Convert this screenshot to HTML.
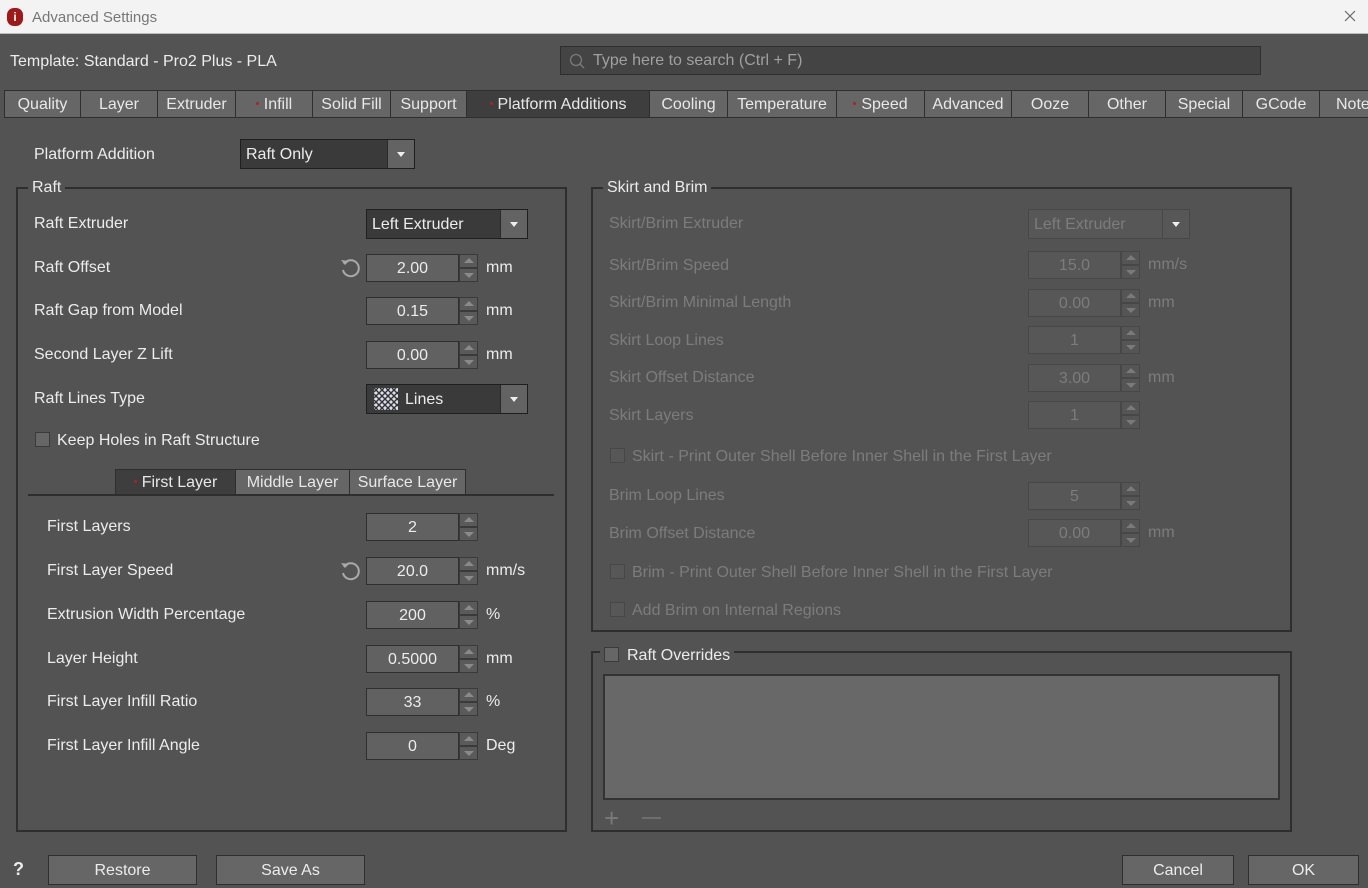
<!DOCTYPE html><html><head><style>
*{box-sizing:border-box;margin:0;padding:0}
body{width:1368px;height:888px;overflow:hidden;background:#535353;font-family:"Liberation Sans",sans-serif;font-size:16px;color:#ececec;position:relative}
.a{position:absolute}
.title{left:0;top:0;width:1368px;height:34px;background:#f3f3f3;color:#777;font-size:15px;border-bottom:1px solid #bbb}
.tab{position:absolute;top:90px;height:28px;background:#666;border:1px solid #2e2e2e;text-align:center;line-height:28px;color:#e8e8e8;white-space:nowrap;overflow:hidden}
.sel{background:#3e3e3e}
.dot{display:inline-block;width:3px;height:3px;border-radius:2px;background:#b02020;vertical-align:4px;margin-right:5px}
.lbl{position:absolute;white-space:nowrap;margin-top:1px}
.spin{position:absolute;width:112px;height:28px}
.spin .f{position:absolute;left:0;top:0;width:93px;height:28px;background:#616161;border:1px solid #2f2f2f;text-align:center;line-height:27px}
.spin .u,.spin .d{position:absolute;left:93px;width:19px;height:14px;background:#5a5a5a;border:1px solid #3a3a3a}
.spin .u{top:0}.spin .d{top:14px}
.spin .u:after{content:"";position:absolute;left:4px;top:3px;border:5px solid transparent;border-bottom:5px solid #8a8a8a;border-top:0}
.spin .d:after{content:"";position:absolute;left:4px;top:4px;border:5px solid transparent;border-top:5px solid #8a8a8a;border-bottom:0}
.unit{position:absolute;left:120px;top:5px;white-space:nowrap}
.dd{position:absolute;width:162px;height:30px;background:#3a3a3a;border:1px solid #1f1f1f;line-height:29px;padding-left:5px}
.dd .b{position:absolute;right:0;top:0;width:27px;height:28px;background:#636363;border-left:1px solid #2a2a2a}
.dd .b:after{content:"";position:absolute;left:9px;top:12px;border:4px solid transparent;border-top:5px solid #eee;border-bottom:0}
.grp{position:absolute;border:2px solid #2e2e2e}
.gt{position:absolute;background:#535353;padding:0 4px;white-space:nowrap;margin-top:1px}
.cb{position:absolute;width:15px;height:15px;background:#666;border:1px solid #3a3a3a}
.dis{color:#7c7c7c}
.dis .f{background:#575757;border-color:#474747;color:#7c7c7c}
.dis .u,.dis .d{background:#555;border-color:#474747}
.dis .u:after{border-bottom-color:#7a7a7a}.dis .d:after{border-top-color:#7a7a7a}
.btn{position:absolute;top:855px;height:30px;background:#666;border:1px solid #2e2e2e;text-align:center;line-height:29px}
.reset{position:absolute;width:22px;height:22px}
</style></head><body>
<div class="a title"><div class="a" style="left:7px;top:8px;width:16px;height:18px;background:#a01818;border-radius:7px;color:#fff;font-size:12px;font-weight:bold;text-align:center;line-height:18px">i</div><span class="a" style="left:32px;top:9px">Advanced Settings</span><svg class="a" style="left:1344px;top:10px" width="12" height="12"><path d="M1 1L11 11M11 1L1 11" stroke="#666" stroke-width="1.2"/></svg></div>
<div class="lbl" style="left:10px;top:52px;font-size:16px">Template: Standard - Pro2 Plus - PLA</div>
<div class="a" style="left:560px;top:46px;width:701px;height:29px;background:#444;border:1px solid #2e2e2e;color:#a0a0a0;line-height:28px;padding-left:32px">Type here to search (Ctrl + F)
<svg class="a" style="left:8px;top:6px" width="16" height="16"><circle cx="7" cy="7" r="5.5" stroke="#7a7a7a" stroke-width="1.3" fill="none"/><line x1="11" y1="11" x2="15" y2="15" stroke="#7a7a7a" stroke-width="1.3"/></svg></div>
<div class="tab" style="left:4px;width:77px">Quality</div>
<div class="tab" style="left:80px;width:78px">Layer</div>
<div class="tab" style="left:157px;width:79px">Extruder</div>
<div class="tab" style="left:235px;width:78px"><span class="dot"></span>Infill</div>
<div class="tab" style="left:312px;width:79px">Solid Fill</div>
<div class="tab" style="left:390px;width:77px">Support</div>
<div class="tab sel" style="left:466px;width:184px"><span class="dot"></span>Platform Additions</div>
<div class="tab" style="left:649px;width:79px">Cooling</div>
<div class="tab" style="left:727px;width:110px">Temperature</div>
<div class="tab" style="left:836px;width:89px"><span class="dot"></span>Speed</div>
<div class="tab" style="left:924px;width:88px">Advanced</div>
<div class="tab" style="left:1011px;width:78px">Ooze</div>
<div class="tab" style="left:1088px;width:78px">Other</div>
<div class="tab" style="left:1165px;width:78px">Special</div>
<div class="tab" style="left:1242px;width:78px">GCode</div>
<div class="tab" style="left:1319px;width:60px;text-align:left;padding-left:16px">Notes</div>

<div class="lbl" style="left:34px;top:145px">Platform Addition</div>
<div class="dd" style="left:240px;top:139px;width:175px">Raft Only<div class="b"></div></div>

<div class="grp" style="left:16px;top:187px;width:551px;height:645px"></div>
<div class="gt" style="left:28px;top:178px">Raft</div>
<div class="lbl" style="left:34px;top:214px">Raft Extruder</div>
<div class="dd" style="left:366px;top:209px">Left Extruder<div class="b"></div></div>
<div class="lbl" style="left:34px;top:258px">Raft Offset</div>
<svg class="reset" style="left:339px;top:257px" viewBox="0 0 22 22"><path d="M5 7 A8 8 0 1 1 4 13" fill="none" stroke="#aaa" stroke-width="2"/><path d="M2 3 L6 8 L10 4 Z" fill="#aaa"/></svg>
<div class="spin" style="left:366px;top:254px"><div class="f">2.00</div><div class="u"></div><div class="d"></div><span class="unit">mm</span></div>
<div class="lbl" style="left:34px;top:301px">Raft Gap from Model</div>
<div class="spin" style="left:366px;top:297px"><div class="f">0.15</div><div class="u"></div><div class="d"></div><span class="unit">mm</span></div>
<div class="lbl" style="left:34px;top:345px">Second Layer Z Lift</div>
<div class="spin" style="left:366px;top:341px"><div class="f">0.00</div><div class="u"></div><div class="d"></div><span class="unit">mm</span></div>
<div class="lbl" style="left:34px;top:389px">Raft Lines Type</div>
<div class="dd" style="left:366px;top:384px;padding-left:38px"><svg class="a" style="left:7px;top:3px" width="24" height="22"><rect width="24" height="22" fill="#dde"/><path d="M0 4L4 0M0 10L10 0M0 16L16 0M0 22L22 0M6 22L24 4M12 22L24 10M18 22L24 16M0 18L4 22M0 12L10 22M0 6L16 22M0 0L22 22M6 0L24 18M12 0L24 12M18 0L24 6" stroke="#333" stroke-width="1.4"/></svg>Lines<div class="b"></div></div>
<div class="cb" style="left:35px;top:432px"></div>
<div class="lbl" style="left:57px;top:431px">Keep Holes in Raft Structure</div>
<div class="tab sel" style="left:115px;top:469px;width:121px;height:26px;line-height:26px"><span class="dot"></span>First Layer</div>
<div class="tab" style="left:235px;top:469px;width:115px;height:26px;line-height:26px">Middle Layer</div>
<div class="tab" style="left:349px;top:469px;width:117px;height:26px;line-height:26px">Surface Layer</div>
<div class="a" style="left:28px;top:494px;width:526px;height:2px;background:#2e2e2e"></div>
<div class="lbl" style="left:47px;top:517px">First Layers</div>
<div class="spin" style="left:366px;top:513px"><div class="f">2</div><div class="u"></div><div class="d"></div></div>
<div class="lbl" style="left:47px;top:561px">First Layer Speed</div>
<svg class="reset" style="left:339px;top:560px" viewBox="0 0 22 22"><path d="M5 7 A8 8 0 1 1 4 13" fill="none" stroke="#aaa" stroke-width="2"/><path d="M2 3 L6 8 L10 4 Z" fill="#aaa"/></svg>
<div class="spin" style="left:366px;top:557px"><div class="f">20.0</div><div class="u"></div><div class="d"></div><span class="unit">mm/s</span></div>
<div class="lbl" style="left:47px;top:605px">Extrusion Width Percentage</div>
<div class="spin" style="left:366px;top:601px"><div class="f">200</div><div class="u"></div><div class="d"></div><span class="unit">%</span></div>
<div class="lbl" style="left:47px;top:649px">Layer Height</div>
<div class="spin" style="left:366px;top:645px"><div class="f">0.5000</div><div class="u"></div><div class="d"></div><span class="unit">mm</span></div>
<div class="lbl" style="left:47px;top:692px">First Layer Infill Ratio</div>
<div class="spin" style="left:366px;top:688px"><div class="f">33</div><div class="u"></div><div class="d"></div><span class="unit">%</span></div>
<div class="lbl" style="left:47px;top:736px">First Layer Infill Angle</div>
<div class="spin" style="left:366px;top:732px"><div class="f">0</div><div class="u"></div><div class="d"></div><span class="unit">Deg</span></div>

<div class="grp" style="left:591px;top:187px;width:701px;height:445px"></div>
<div class="gt" style="left:603px;top:178px">Skirt and Brim</div>
<div class="dis">
<div class="lbl" style="left:609px;top:214px">Skirt/Brim Extruder</div>
<div class="dd" style="left:1028px;top:209px;background:#575757;border-color:#474747">Left Extruder<div class="b" style="background:#575757;border-color:#474747"></div></div>
<div class="lbl" style="left:609px;top:256px">Skirt/Brim Speed</div>
<div class="spin dis" style="left:1028px;top:251px"><div class="f">15.0</div><div class="u"></div><div class="d"></div><span class="unit">mm/s</span></div>
<div class="lbl" style="left:609px;top:293px">Skirt/Brim Minimal Length</div>
<div class="spin dis" style="left:1028px;top:289px"><div class="f">0.00</div><div class="u"></div><div class="d"></div><span class="unit">mm</span></div>
<div class="lbl" style="left:609px;top:331px">Skirt Loop Lines</div>
<div class="spin dis" style="left:1028px;top:326px"><div class="f">1</div><div class="u"></div><div class="d"></div></div>
<div class="lbl" style="left:609px;top:368px">Skirt Offset Distance</div>
<div class="spin dis" style="left:1028px;top:364px"><div class="f">3.00</div><div class="u"></div><div class="d"></div><span class="unit">mm</span></div>
<div class="lbl" style="left:609px;top:406px">Skirt Layers</div>
<div class="spin dis" style="left:1028px;top:401px"><div class="f">1</div><div class="u"></div><div class="d"></div></div>
<div class="cb" style="left:610px;top:448px;background:#575757;border-color:#474747"></div>
<div class="lbl" style="left:632px;top:447px">Skirt - Print Outer Shell Before Inner Shell in the First Layer</div>
<div class="lbl" style="left:609px;top:486px">Brim Loop Lines</div>
<div class="spin dis" style="left:1028px;top:482px"><div class="f">5</div><div class="u"></div><div class="d"></div></div>
<div class="lbl" style="left:609px;top:524px">Brim Offset Distance</div>
<div class="spin dis" style="left:1028px;top:519px"><div class="f">0.00</div><div class="u"></div><div class="d"></div><span class="unit">mm</span></div>
<div class="cb" style="left:610px;top:564px;background:#575757;border-color:#474747"></div>
<div class="lbl" style="left:632px;top:563px">Brim - Print Outer Shell Before Inner Shell in the First Layer</div>
<div class="cb" style="left:610px;top:602px;background:#575757;border-color:#474747"></div>
<div class="lbl" style="left:632px;top:601px">Add Brim on Internal Regions</div>
</div>

<div class="grp" style="left:591px;top:651px;width:701px;height:181px"></div>
<div class="gt" style="left:600px;top:644px;padding-left:4px"><span class="cb" style="position:relative;display:inline-block;top:2px;left:0;margin-right:8px"></span>Raft Overrides</div>
<div class="a" style="left:603px;top:674px;width:677px;height:126px;background:#686868;border:2px solid #333"></div>
<div class="a" style="left:604px;top:806px;font-size:26px;color:#7a7a7a;line-height:24px">+</div>
<div class="a" style="left:642px;top:817px;width:19px;height:2px;background:#6e6e6e"></div>

<div class="a" style="left:13px;top:859px;font-size:18px;font-weight:bold">?</div>
<div class="btn" style="left:48px;width:149px">Restore</div>
<div class="btn" style="left:216px;width:149px">Save As</div>
<div class="btn" style="left:1122px;width:112px">Cancel</div>
<div class="btn" style="left:1248px;width:111px">OK</div>
</body></html>
